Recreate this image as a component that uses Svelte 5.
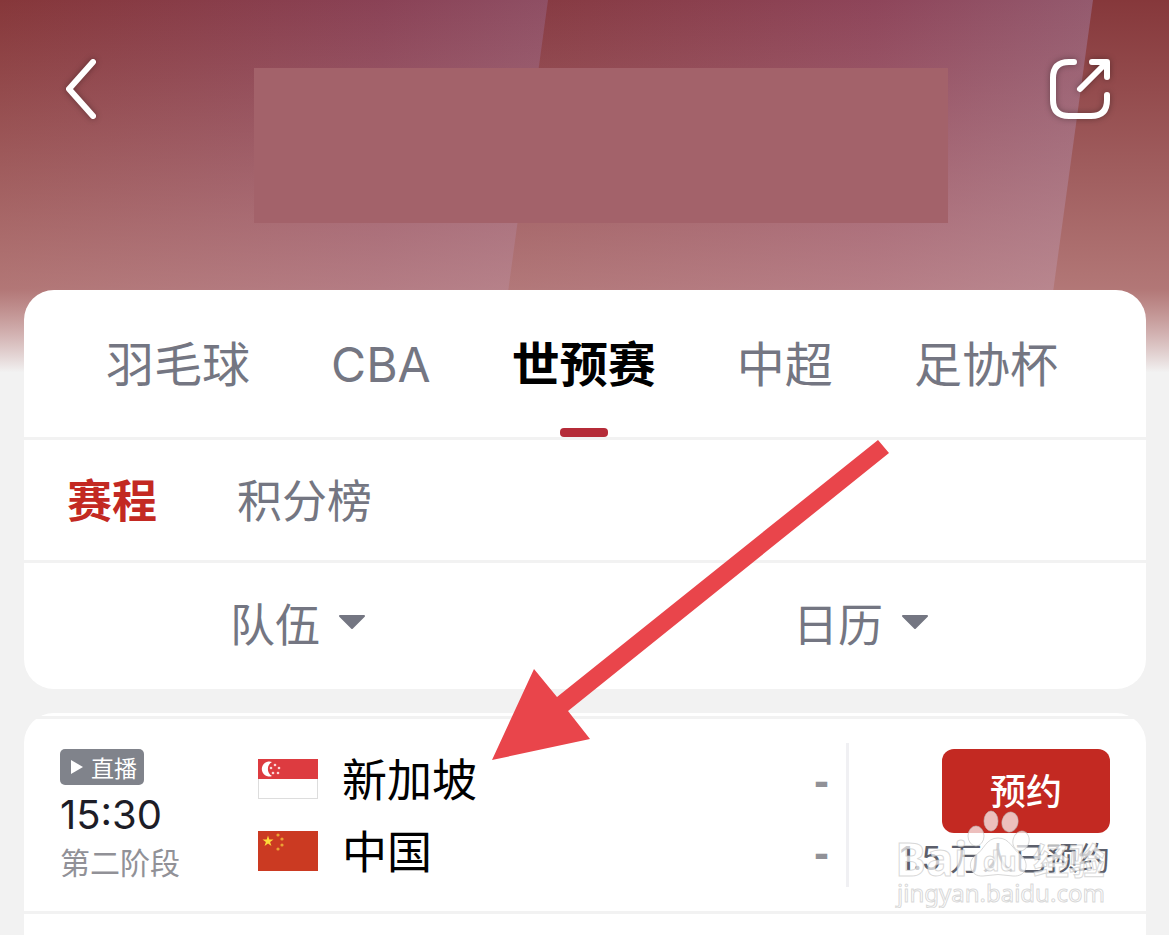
<script lang="ts">
  interface Match {
    time: string;
    stage: string;
    teams: { name: string; flag: string; score: string }[];
    booked: string;
  }

  const leagues = ["羽毛球", "CBA", "世预赛", "中超", "足协杯"];
  const views = ["赛程", "积分榜"];
  const filters = ["队伍", "日历"];

  const matches: Match[] = [
    {
      time: "15:30",
      stage: "第二阶段",
      teams: [
        { name: "新加坡", flag: "sg", score: "-" },
        { name: "中国", flag: "cn", score: "-" },
      ],
      booked: "1.5 万人已预约",
    },
  ];

  let league = $state("世预赛");
  let view = $state("赛程");
</script>

<div class="page">
  <svg class="backdrop" viewBox="0 0 1169 380" preserveAspectRatio="none" aria-hidden="true">
    <defs>
      <linearGradient id="band-a" x1="0" y1="0" x2="1" y2="0">
        <stop offset="0" stop-color="#86373a" />
        <stop offset="0.7" stop-color="#8a4256" />
        <stop offset="1" stop-color="#8f4f64" />
      </linearGradient>
      <linearGradient id="band-b" x1="0" y1="0" x2="1" y2="0">
        <stop offset="0.45" stop-color="#86393f" />
        <stop offset="0.8" stop-color="#8e455a" />
        <stop offset="1" stop-color="#945a6e" />
      </linearGradient>
      <linearGradient id="fade" x1="0" y1="0" x2="0" y2="1">
        <stop offset="0" stop-color="#deb6b2" stop-opacity="0" />
        <stop offset="0.76" stop-color="#deb6b2" stop-opacity="0.5" />
        <stop offset="0.98" stop-color="#f2f2f2" stop-opacity="1" />
      </linearGradient>
    </defs>
    <rect width="1169" height="380" fill="#86383b" />
    <path d="M0 0H1093L1041 380H0Z" fill="url(#band-b)" />
    <path d="M0 0H548L496 380H0Z" fill="url(#band-a)" />
    <rect width="1169" height="380" fill="url(#fade)" />
  </svg>

  <header>
    <button class="icon" aria-label="返回">
      <svg viewBox="0 0 72 72">
        <path d="M40 9L16 36L40 63" />
      </svg>
    </button>
    <div class="banner"></div>
    <button class="icon" aria-label="分享">
      <svg viewBox="0 0 72 72">
        <path d="M30 9H25Q9 9 9 25V47Q9 63 25 63H47Q63 63 63 47V42" />
        <path d="M36 36L61 11M48 9H63V24" />
      </svg>
    </button>
  </header>

  <main>
    <section class="card menu">
      <nav class="leagues">
        {#each leagues as name}
          <button class:active={league === name} onclick={() => (league = name)}>{name}</button>
        {/each}
      </nav>
      <nav class="views">
        {#each views as name}
          <button class:active={view === name} onclick={() => (view = name)}>{name}</button>
        {/each}
      </nav>
      <div class="filters">
        {#each filters as name}
          <button>
            {name}
            <svg viewBox="0 0 28 16"><path d="M2 2H26L14 14Z" /></svg>
          </button>
        {/each}
      </div>
    </section>

    <section class="card list">
      {#each matches as match}
        <article>
          <div class="when">
            <span class="live">
              <svg viewBox="0 0 13 16"><path d="M1 1V15L13 8Z" /></svg>
              直播
            </span>
            <time>{match.time}</time>
            <span class="stage">{match.stage}</span>
          </div>
          <div class="teams">
            {#each match.teams as team}
              <div class="team">
                <svg class="flag" viewBox="0 0 60 40">
                  {#if team.flag === "sg"}
                    <rect x="0.5" y="0.5" width="59" height="39" fill="#fff" stroke="#ddd" />
                    <rect width="60" height="20" fill="#dd3b40" />
                    <path d="M14 3A7.500 7.500 0 1 0 14 17A8 8 0 0 1 14 3Z" fill="#fff" />
                    <g fill="#fbd5d6">
                      <circle cx="17" cy="6" r="1.300" />
                      <circle cx="13" cy="9" r="1.300" />
                      <circle cx="21" cy="9" r="1.300" />
                      <circle cx="15" cy="14" r="1.300" />
                      <circle cx="20" cy="14" r="1.300" />
                    </g>
                  {:else}
                    <rect width="60" height="40" fill="#cb3a22" />
                    <path
                      d="M10 4.500L11.300 8.500H15.500L12.100 11L13.400 15L10 12.500L6.600 15L7.900 11L4.500 8.500H8.700Z"
                      fill="#fddb3a"
                    />
                    <g fill="#eba235">
                      <circle cx="20" cy="4" r="1.600" />
                      <circle cx="24" cy="8" r="1.600" />
                      <circle cx="24" cy="14" r="1.600" />
                      <circle cx="20" cy="18" r="1.600" />
                    </g>
                  {/if}
                </svg>
                <span class="name">{team.name}</span>
                <span class="score">{team.score}</span>
              </div>
            {/each}
          </div>
          <div class="booking">
            <button>预约</button>
            <span>{match.booked}</span>
            <svg class="watermark" viewBox="0 0 220 104">
              <g class="paw">
                <ellipse cx="86" cy="32" rx="8" ry="10" />
                <ellipse cx="101" cy="17" rx="7" ry="10" />
                <ellipse cx="120" cy="18" rx="8" ry="10" transform="rotate(12 120 18)" />
                <ellipse cx="131" cy="37" rx="8" ry="10" transform="rotate(15 131 37)" />
                <path d="M108 34C96 34 94 46 86 51C76 58 80 73 93 72Q108 69 123 72C137 73 140 59 131 51C122 45 120 34 108 34Z" />
              </g>
              <text x="5" y="72" class="brand">Bai</text>
              <text x="93" y="67" class="du">du</text>
              <text x="143" y="71" class="cn">经验</text>
              <text x="7" y="98" class="site">jingyan.baidu.com</text>
            </svg>
          </div>
        </article>
      {/each}
    </section>
  </main>

  <svg class="pointer" viewBox="0 0 397 320" aria-hidden="true">
    <path d="M386 0L397 13L76 271L98 299L0 320L42 229L65 257Z" />
  </svg>
</div>

<style>
  :global(body) {
    background: #f2f2f2;
  }
  .page {
    position: relative;
    display: flex;
    flex-direction: column;
    min-height: 100vh;
    overflow: hidden;
    font-family: Inter, "Noto Sans CJK SC", sans-serif;
    font-weight: 390;
    color: #747682;
  }
  button {
    padding: 0;
    border: none;
    background: none;
    color: inherit;
    font: inherit;
    cursor: pointer;
  }
  .backdrop {
    position: absolute;
    top: 0;
    left: 0;
    width: 100%;
    height: 380px;
  }
  header {
    position: relative;
    display: flex;
    align-items: flex-start;
    padding: 53px 53px 67px;
  }
  .icon,
  .icon svg {
    display: block;
    width: 72px;
    height: 72px;
  }
  .icon path {
    fill: none;
    stroke: #fff;
    stroke-width: 6;
    stroke-linecap: round;
    stroke-linejoin: round;
  }
  .icon svg {
    filter: drop-shadow(0 0 3px rgba(0, 0, 0, 0.35));
  }
  .banner {
    flex: 1;
    height: 155px;
    margin: 15px 96px 0 129px;
    background: #a3626a;
  }
  main {
    position: relative;
    flex: 1;
    display: flex;
    flex-direction: column;
    gap: 24px;
    padding: 0 23px 0 24px;
  }
  .card {
    background: #fff;
    border-radius: 30px;
  }
  .leagues {
    display: flex;
    justify-content: space-between;
    height: 147px;
    padding: 0 88px 0 82px;
    border-bottom: 3px solid #f2f2f2;
    font-size: 48px;
  }
  .leagues button {
    display: flex;
    flex-direction: column;
    align-items: center;
    line-height: 72px;
    padding-top: 39px;
  }
  .leagues .active {
    color: #000;
    font-weight: 700;
  }
  .leagues .active::after {
    content: "";
    width: 48px;
    height: 9px;
    margin-top: 27px;
    border-radius: 4px;
    background: #b52b38;
  }
  .views {
    display: flex;
    gap: 80px;
    height: 116px;
    padding: 0 43px 4px;
    border-bottom: 3px solid #f2f2f2;
    font-size: 45px;
  }
  .views .active {
    color: #c32922;
    font-weight: 700;
  }
  .filters {
    display: grid;
    grid-template-columns: 1fr 1fr;
    height: 118px;
    padding: 0 6px 8px 0;
    font-size: 45px;
  }
  .filters button {
    display: flex;
    align-items: center;
    justify-content: center;
    gap: 18px;
  }
  .filters button:first-child {
    padding-right: 10px;
  }
  .filters svg {
    width: 28px;
    height: 16px;
  }
  .filters path {
    fill: #747682;
    stroke: #747682;
    stroke-width: 2;
    stroke-linejoin: round;
  }
  .list {
    flex: 1;
    padding-top: 3px;
    border-radius: 30px 30px 0 0;
  }
  article {
    display: flex;
    height: 192px;
    border-top: 3px solid #f2f2f2;
    border-bottom: 3px solid #f2f2f2;
  }
  .when {
    display: flex;
    flex-direction: column;
    align-items: flex-start;
    width: 198px;
    padding: 30px 0 0 36px;
  }
  .live {
    display: flex;
    align-items: center;
    gap: 8px;
    height: 36px;
    padding: 0 7px 0 10px;
    border-radius: 5px;
    background: #80838b;
    color: #fff;
    font-size: 23px;
    font-weight: 400;
  }
  .live svg {
    width: 13px;
    height: 16px;
    fill: #fff;
  }
  time {
    color: #1d1d27;
    font-size: 40px;
    font-weight: 400;
    line-height: 60px;
  }
  .stage {
    color: #919197;
    font-size: 30px;
    line-height: 36px;
  }
  .teams {
    flex: 1;
    height: 144px;
    margin-top: 24px;
    border-right: 3px solid #f0f0f3;
  }
  .team {
    display: flex;
    align-items: center;
    height: 72px;
    padding-right: 17px;
  }
  .flag {
    width: 60px;
    height: 40px;
    margin-right: 24px;
  }
  .name {
    flex: 1;
    padding-top: 4px;
    color: #000;
    font-size: 45px;
    font-weight: 400;
    line-height: 72px;
  }
  .score {
    padding-top: 4px;
    color: #919197;
    font-family: "Liberation Sans", Arial, sans-serif;
    font-size: 45px;
    font-weight: 700;
  }
  .booking {
    position: relative;
    display: flex;
    flex-direction: column;
    align-items: flex-end;
    width: 261px;
    padding: 30px 36px 0 0;
  }
  .booking button {
    width: 168px;
    height: 84px;
    padding-bottom: 4px;
    border-radius: 12px;
    background: #c32922;
    color: #fff;
    font-size: 36px;
    font-weight: 500;
  }
  .booking span {
    color: #5c5f6b;
    font-size: 32px;
    line-height: 52px;
    white-space: nowrap;
  }
  .watermark {
    position: absolute;
    right: 36px;
    top: 85px;
    width: 220px;
    height: 104px;
    fill: rgba(255, 255, 255, 0.7);
    stroke: rgba(190, 190, 190, 0.6);
    stroke-width: 1;
    pointer-events: none;
  }
  .brand {
    font-family: "Open Sans", sans-serif;
    font-size: 46px;
    font-weight: 700;
  }
  .du {
    font-family: "Open Sans", sans-serif;
    font-size: 26px;
    font-weight: 700;
  }
  .cn {
    font-size: 36px;
    font-weight: 700;
  }
  .site {
    font-family: "Noto Sans", sans-serif;
    font-size: 24px;
    font-weight: 400;
  }
  .pointer {
    position: absolute;
    left: 492px;
    top: 440px;
    width: 397px;
    height: 320px;
    fill: #e9454b;
    pointer-events: none;
  }
</style>
